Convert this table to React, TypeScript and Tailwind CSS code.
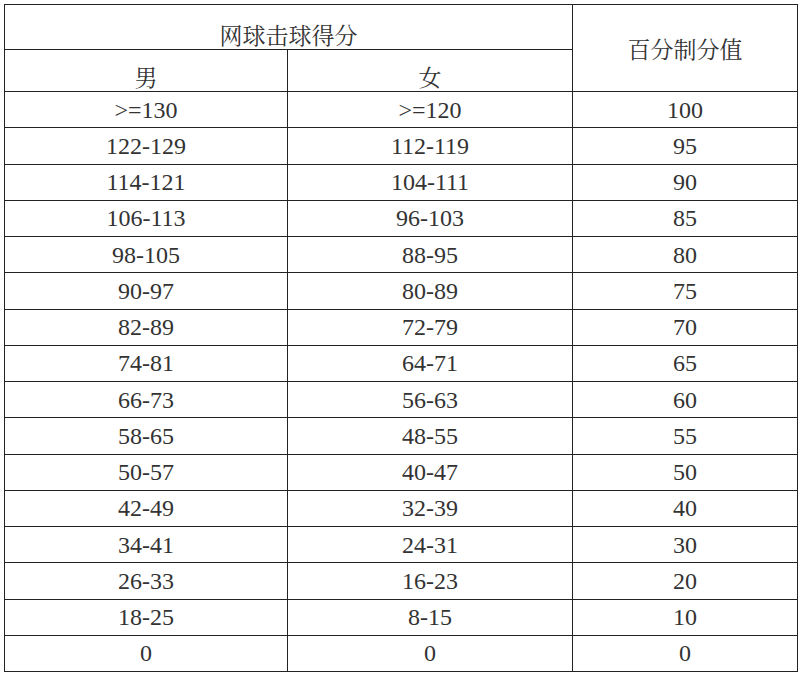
const rows: [string, string, string][] = [
  [">=130", ">=120", "100"],
  ["122-129", "112-119", "95"],
  ["114-121", "104-111", "90"],
  ["106-113", "96-103", "85"],
  ["98-105", "88-95", "80"],
  ["90-97", "80-89", "75"],
  ["82-89", "72-79", "70"],
  ["74-81", "64-71", "65"],
  ["66-73", "56-63", "60"],
  ["58-65", "48-55", "55"],
  ["50-57", "40-47", "50"],
  ["42-49", "32-39", "40"],
  ["34-41", "24-31", "30"],
  ["26-33", "16-23", "20"],
  ["18-25", "8-15", "10"],
  ["0", "0", "0"],
];

const cjk = "font-['Noto_Serif_CJK_SC','Noto_Sans_CJK_SC',serif] text-[23px] font-normal";

export default function App() {
  return (
    <div className="min-h-screen bg-white pl-[4px] pt-[4px]">
      <table className="w-[793px] table-fixed border-collapse text-center text-[#333] font-['Liberation_Serif','Noto_Sans_CJK_SC',serif]">
        <colgroup>
          <col className="w-[283px]" />
          <col className="w-[285px]" />
          <col className="w-[225px]" />
        </colgroup>
        <thead>
          <tr className="h-[45px]">
            <th colSpan={2} className={`border border-[#222] pt-[15px] leading-none ${cjk}`}>
              网球击球得分
            </th>
            <th rowSpan={2} className={`border border-[#222] leading-none ${cjk}`}>
              百分制分值
            </th>
          </tr>
          <tr className="h-[42px]">
            <th className={`border border-[#222] pt-[11px] leading-none ${cjk}`}>男</th>
            <th className={`border border-[#222] pt-[11px] leading-none ${cjk}`}>女</th>
          </tr>
        </thead>
        <tbody className="text-[24px] leading-[26px]">
          {rows.map((r, i) => (
            <tr key={i} className="h-[36.25px]">
              {r.map((c, j) => (
                <td key={j} className="border border-[#222] p-0">
                  {c}
                </td>
              ))}
            </tr>
          ))}
        </tbody>
      </table>
    </div>
  );
}
